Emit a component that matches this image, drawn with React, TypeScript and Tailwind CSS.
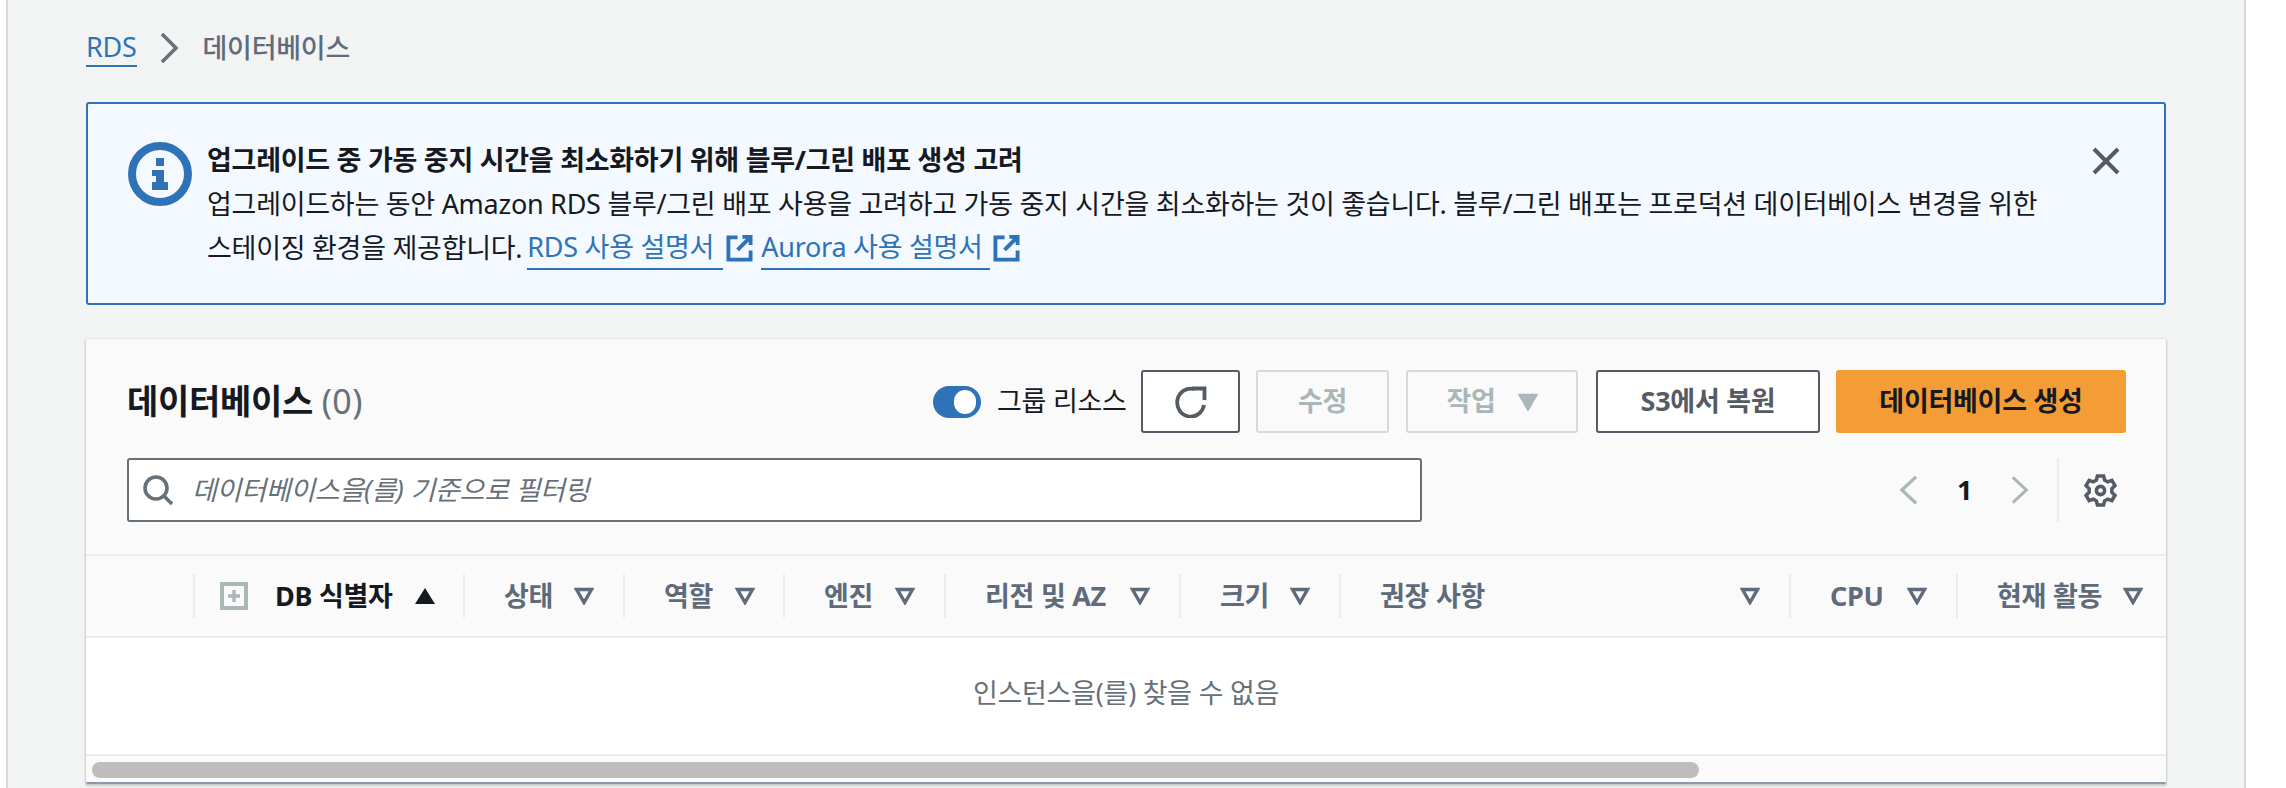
const columns = [
  { label: "상태", className: "w-[160px] pr-[29px]" },
  { label: "역할", className: "w-[160px] pr-[28px]" },
  { label: "엔진", className: "w-[161px] pr-[29px]" },
  { label: "리전 및 AZ", className: "w-[235px] pr-[29px]" },
  { label: "크기", className: "w-[160px] pr-[29px]" },
  { label: "권장 사항", className: "w-[450px] pr-[29px]" },
  { label: "CPU", className: "w-[167px] pr-[29px]" },
  { label: "현재 활동", className: "w-[210px] pr-[23px]" },
];

const ExternalIcon = () => (
  <svg viewBox="0 0 28 28" className="ml-[3px] inline-block h-[28px] w-[27px] shrink-0" fill="none" stroke="#2e73b8">
    <path d="M12 3H2.500v23h23v-9.500" strokeWidth="4" />
    <path d="M17 2.500h8.500V11M25 3L12 16" strokeWidth="4" />
  </svg>
);

const CaretDown = ({ filled = false, color = "#5f6b7a" }: { filled?: boolean; color?: string }) => (
  <svg viewBox="0 0 20 18" className="h-[18px] w-[20px] shrink-0" fill={filled ? color : "none"} stroke={color} strokeWidth="3.4">
    <path d="M2.500 2.500h15L10 15.500z" />
  </svg>
);

const ToolbarButton = ({ children, className }: { children: React.ReactNode; className: string }) => (
  <button type="button" className={`flex h-[63px] items-center justify-center rounded-[3px] font-bold ${className}`}>
    {children}
  </button>
);

export default function App() {
  return (
    <div className="h-[788px] w-[2286px] overflow-hidden bg-white font-['Noto_Sans','Noto_Sans_CJK_KR',sans-serif] text-[27px] tracking-[-0.27px]">
      <div className="ml-[6px] h-full w-[2240px] border-x-2 border-x-[#d5dbdb] bg-[#f2f3f3] pl-[78px] pr-[78px]">
        <nav className="flex h-[102px] items-start pt-[28px] text-[#5f6b7a]">
          <a className="h-[39px] border-b-2 border-[#2e73b8] leading-[38px] text-[#2e73b8]">RDS</a>
          <svg viewBox="0 0 18 30" className="ml-[23px] mt-[5px] h-[30px] w-[18px]" fill="none" stroke="#687078" strokeWidth="3.6">
            <path d="M2 1l14 14L2 29" />
          </svg>
          <span className="ml-[25px] font-medium leading-[40px]">데이터베이스</span>
        </nav>

        <section className="flex h-[203px] w-[2080px] rounded-[3px] border-2 border-[#2e73b8] bg-[#f3f9ff]">
          <svg viewBox="0 0 64 64" className="ml-[40px] mt-[38px] h-[64px] w-[64px] shrink-0" fill="#2e73b8">
            <circle cx="32" cy="32" r="28" fill="none" stroke="#2e73b8" strokeWidth="8" />
            <path d="M28 16h8v8h-8zM24 28h12v12h4v8H24v-8h4v-6h-4z" />
          </svg>
          <div className="ml-[15px] mt-[34px] flex w-[1860px] flex-col leading-[44px] text-[#16191f]">
            <strong className="font-bold">업그레이드 중 가동 중지 시간을 최소화하기 위해 블루/그린 배포 생성 고려</strong>
            <p className="whitespace-nowrap">
              업그레이드하는 동안 Amazon RDS 블루/그린 배포 사용을 고려하고 가동 중지 시간을 최소화하는 것이 좋습니다. 블루/그린 배포는 프로덕션 데이터베이스 변경을 위한
            </p>
            <p className="flex items-center whitespace-nowrap">
              스테이징 환경을 제공합니다.
              <a className="ml-[5px] flex h-[44px] w-[196px] items-center border-b-2 border-[#2e73b8] text-[#2e73b8]">RDS&nbsp;사용 설명서</a>
              <ExternalIcon />
              <a className="ml-[8px] flex h-[44px] w-[229px] items-center border-b-2 border-[#2e73b8] text-[#2e73b8]">Aurora&nbsp;사용 설명서</a>
              <ExternalIcon />
            </p>
          </div>
          <svg viewBox="0 0 28 28" className="ml-auto mr-[44px] mt-[43px] h-[28px] w-[28px]" fill="none" stroke="#545b64" strokeWidth="4">
            <path d="M2 2l24 24M26 2L2 26" />
          </svg>
        </section>

        <section className="mt-[34px] h-[445px] w-[2080px] rounded-[2px] border-b-2 border-b-[#8d99a8] bg-[#fafafa] shadow-[0_1px_2px_1px_rgba(0,28,36,0.18)]">
          <header className="flex h-[217px] flex-col border-b-2 border-[#eaeded] pl-[41px] pr-[40px] pt-[31px]">
            <div className="flex h-[63px] items-center">
              <h1 className="text-[34px] font-bold text-[#16191f]">
                데이터베이스 <span className="font-normal tracking-[0.5px] text-[#687078]">(0)</span>
              </h1>
              <div className="ml-auto flex h-[32px] w-[48px] justify-end rounded-full bg-[#2e73b8] pr-[5px] pt-[4px]">
                <span className="h-[24px] w-[22px] rounded-full bg-white" />
              </div>
              <span className="ml-[16px] w-[144px] text-[#16191f]">그룹 리소스</span>
              <ToolbarButton className="w-[99px] border-2 border-[#545b64] bg-white">
                <svg viewBox="0 0 32 32" className="h-[32px] w-[32px]" fill="none" stroke="#545b64" strokeWidth="3.8">
                  <path d="M29 19A13.500 14 0 1 1 19 3" />
                  <path d="M17 2.500h12.500V14" />
                </svg>
              </ToolbarButton>
              <ToolbarButton className="ml-[16px] w-[133px] border-2 border-[#d5dbdb] text-[#aab7b8]">수정</ToolbarButton>
              <ToolbarButton className="ml-[17px] w-[172px] gap-[22px] border-2 border-[#d5dbdb] text-[#aab7b8]">
                작업
                <CaretDown filled color="#aab7b8" />
              </ToolbarButton>
              <ToolbarButton className="ml-[18px] w-[224px] border-2 border-[#545b64] bg-white text-[#545b64]">S3에서 복원</ToolbarButton>
              <ToolbarButton className="ml-[16px] w-[290px] bg-[#f49d37] text-[#16191f]">데이터베이스 생성</ToolbarButton>
            </div>

            <div className="mt-[25px] flex h-[64px] items-center">
              <label className="flex h-[64px] w-[1295px] items-center rounded-[3px] border-2 border-[#687078] bg-white pl-[14px]">
                <svg viewBox="0 0 30 30" className="h-[30px] w-[30px]" fill="none" stroke="#687078" strokeWidth="3.6">
                  <circle cx="13" cy="13" r="11" />
                  <path d="M21 21l8 8" />
                </svg>
                <span className="ml-[19px] italic text-[#687078]">데이터베이스을(를) 기준으로 필터링</span>
              </label>
              <svg viewBox="0 0 20 30" className="ml-[477px] h-[30px] w-[19px]" fill="none" stroke="#aab7b8" strokeWidth="3.4">
                <path d="M18 1L3 15l15 14" />
              </svg>
              <span className="ml-[39px] w-[13px] font-bold text-[#16191f]">1</span>
              <svg viewBox="0 0 20 30" className="ml-[41px] h-[30px] w-[18px]" fill="none" stroke="#aab7b8" strokeWidth="3.4">
                <path d="M2 1l15 14L2 29" />
              </svg>
              <span className="ml-[28px] h-[64px] w-[2px] bg-[#eaeded]" />
              <svg viewBox="0 0 32 32" className="ml-[25px] h-[33px] w-[33px]" fill="none" stroke="#545b64" strokeWidth="3.4">
                <circle cx="16" cy="16" r="4" />
                <path d="M13 2h6l1 4 3 1.600 4-1.400 3 5-3 3v3.600l3 3-3 5-4-1.400L20 26l-1 4h-6l-1-4-3-1.600-4 1.400-3-5 3-3v-3.600l-3-3 3-5 4 1.400L12 6z" />
              </svg>
            </div>
          </header>

          <div className="flex h-[82px] items-center border-b-2 border-[#eaeded] font-bold text-[#5f6b7a]">
            <div className="h-[44px] w-[107px] shrink-0" />
            <div className="flex h-[44px] w-[270px] shrink-0 items-center border-l-2 border-[#eaeded] pl-[25px]">
              <svg viewBox="0 0 28 28" className="h-[28px] w-[28px]" fill="none">
                <rect x="2" y="2" width="24" height="24" stroke="#aab7b8" strokeWidth="4" fill="#fafafa" />
                <path d="M14 8v12M8 14h12" stroke="#aab7b8" strokeWidth="3.4" />
              </svg>
              <span className="ml-[27px] text-[#16191f]">DB 식별자</span>
              <svg viewBox="0 0 20 16" className="ml-[22px] h-[16px] w-[20px]" fill="#16191f">
                <path d="M10 0l10 16H0z" />
              </svg>
            </div>
            {columns.map((col) => (
              <div key={col.label} className={`flex h-[44px] shrink-0 items-center justify-between border-l-2 border-[#eaeded] pl-[39px] ${col.className}`}>
                <span>{col.label}</span>
                <CaretDown />
              </div>
            ))}
          </div>

          <div className="flex h-[118px] items-center justify-center border-b-2 border-[#eaeded] bg-white pb-[5px] text-[#687078]">
            인스턴스을(를) 찾을 수 없음
          </div>

          <div className="h-[26px] pl-[6px] pt-[6px]">
            <div className="h-[16px] w-[1607px] rounded-full bg-[#bdbdbd]" />
          </div>
        </section>
      </div>
    </div>
  );
}
